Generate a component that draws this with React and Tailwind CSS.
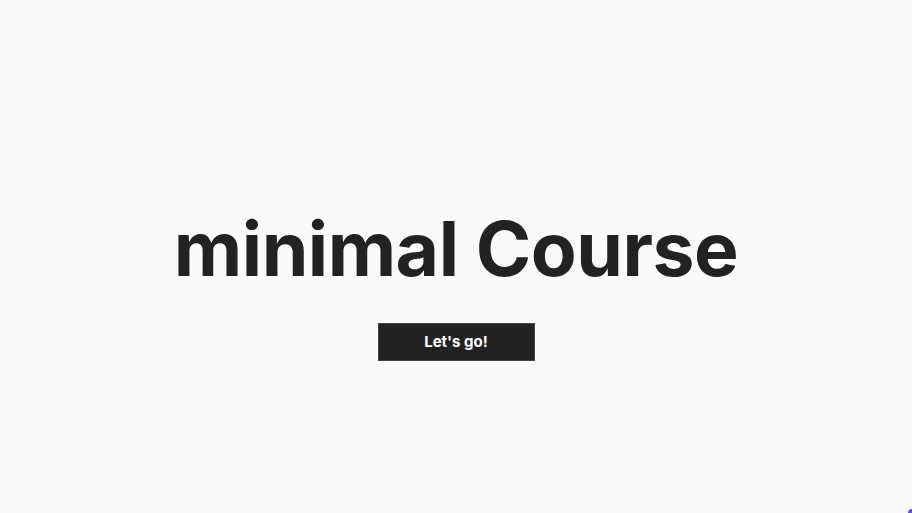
import React from 'react';

const App = () => {
  return (
    <div
      className="relative w-full h-[513px] bg-[#fafafa] flex flex-col items-center pt-[211px] overflow-hidden"
      style={{ fontFamily: 'Inter, "Liberation Sans", sans-serif' }}
    >
      <h1 className="text-[75px] leading-none font-bold text-[#222222] tracking-[-0.5px]">
        minimal Course
      </h1>
      <button className="mt-[37px] w-[157px] h-[38px] bg-[#222222] text-white text-[15px] font-bold border border-[#444]">
        Let's go!
      </button>
      {/* little corner mark */}
      <div className="absolute right-[-4px] bottom-[-4px] w-[8px] h-[8px] rounded-full bg-[#5b4cf0]" />
    </div>
  );
};

export default App;
